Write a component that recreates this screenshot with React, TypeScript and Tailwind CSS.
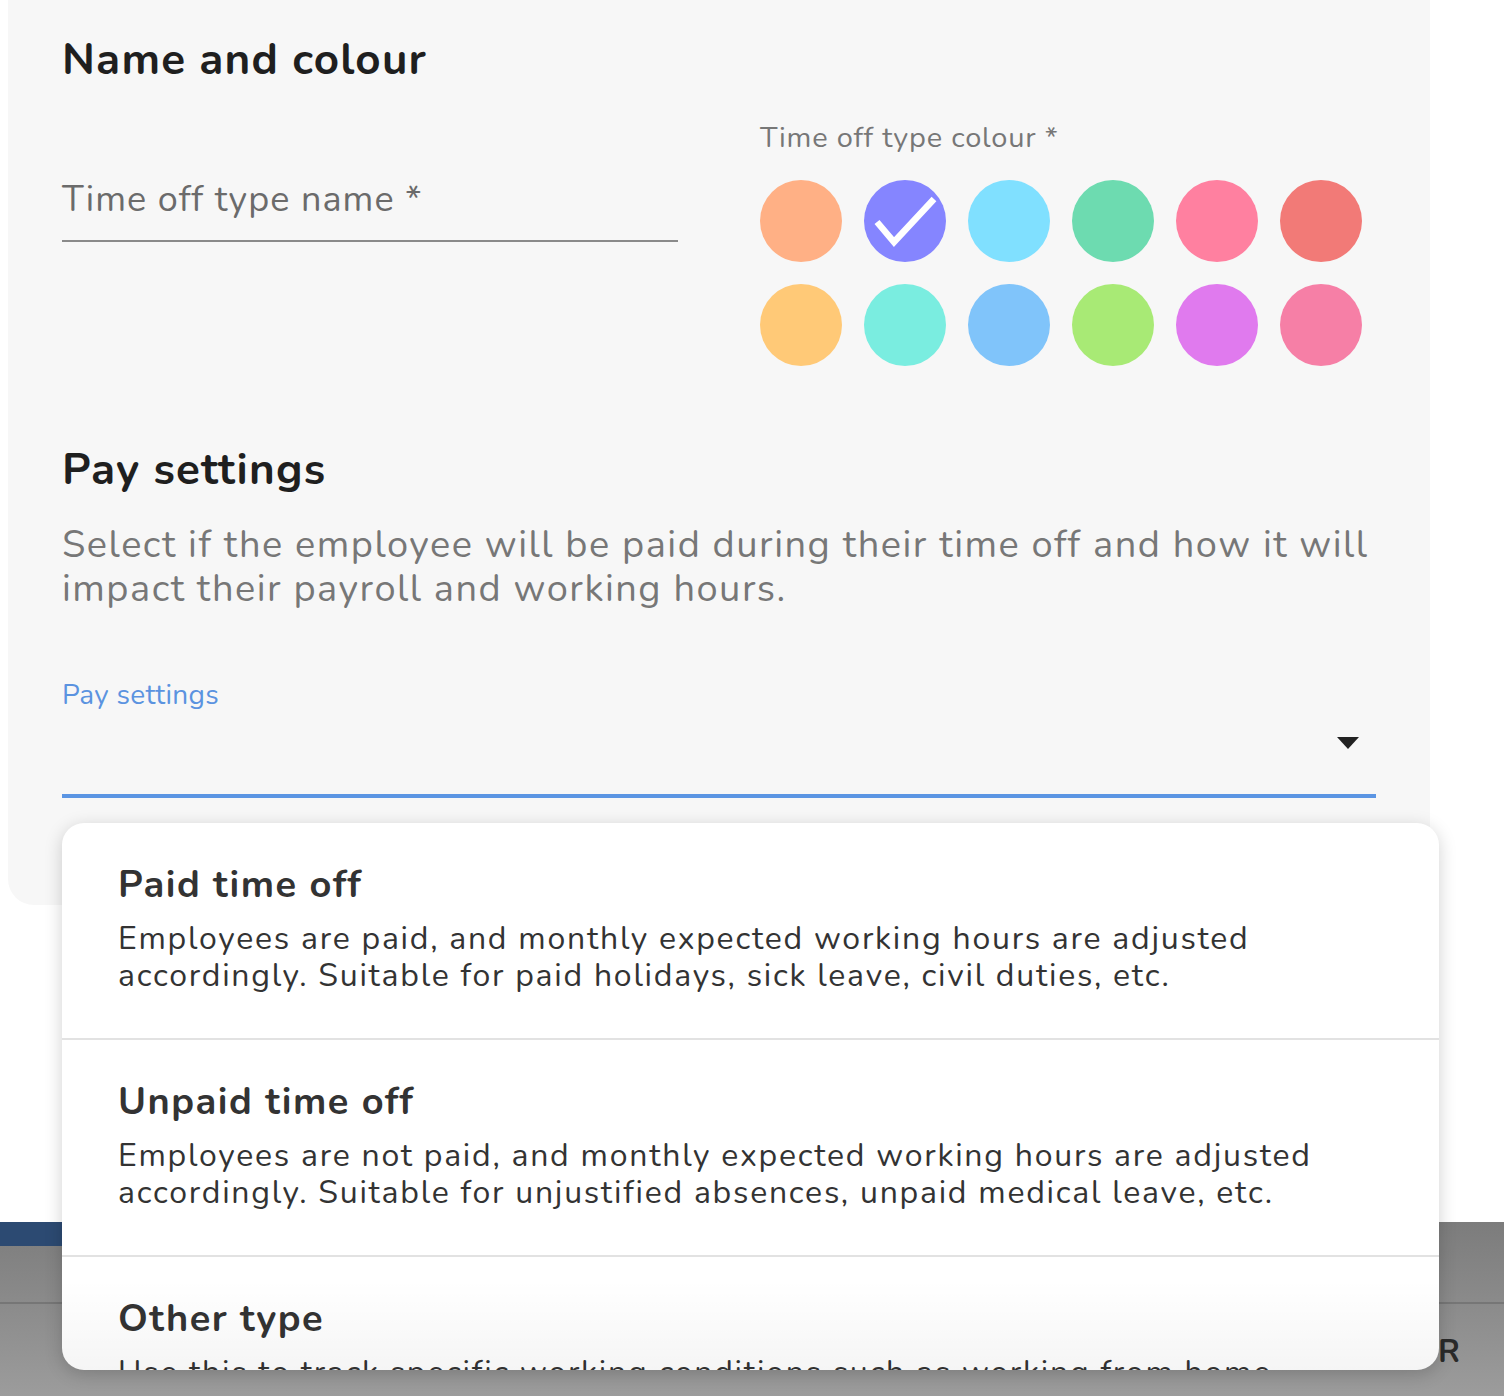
import React from "react";

const colours = [
  "#ffb085", "#8585ff", "#80e0ff", "#6ddbb0", "#ff80a0", "#f27a77",
  "#ffc977", "#7aede0", "#80c4fa", "#a8ea75", "#e07aee", "#f67fa6",
];

const items = [
  {
    title: "Paid time off",
    desc: [
      "Employees are paid, and monthly expected working hours are adjusted",
      "accordingly. Suitable for paid holidays, sick leave, civil duties, etc.",
    ],
  },
  {
    title: "Unpaid time off",
    desc: [
      "Employees are not paid, and monthly expected working hours are adjusted",
      "accordingly. Suitable for unjustified absences, unpaid medical leave, etc.",
    ],
  },
  {
    title: "Other type",
    desc: [
      "Use this to track specific working conditions such as working from home",
      "or other situations that do not affect pay.",
    ],
  },
];

export default function App() {
  const font = { fontFamily: '"Nunito", "Noto Sans", "Open Sans", sans-serif' };
  return (
    <div
      className="relative w-[1504px] h-[1396px] overflow-hidden bg-white flex flex-col"
      style={font}
    >
      {/* Panel */}
      <div className="ml-[8px] w-[1422px] h-[905px] shrink-0 rounded-b-[26px] bg-[#f7f7f7] px-[54px] pt-[36px]">
        <h2 className="text-[44px] leading-[48px] font-bold text-[#1f1f1f] tracking-[1.2px]">
          Name and colour
        </h2>
        <div className="mt-[36px] flex gap-[82px]">
          <div className="w-[616px] pt-[60px]">
            <div className="pb-[20px] border-b-2 border-[#8a8a8a] text-[36px] leading-[40px] text-[#6b6b6b] tracking-[1.1px]">
              Time off type name *
            </div>
          </div>
          <div>
            <div className="text-[29px] leading-[36px] text-[#777777] tracking-[0.8px]">
              Time off type colour *
            </div>
            <div className="mt-[24px] grid grid-cols-6 gap-[22px] w-[602px]">
              {colours.map((c, i) => (
                <div
                  key={i}
                  className="w-[82px] h-[82px] rounded-full flex items-center justify-center"
                  style={{ backgroundColor: c }}
                >
                  {i === 1 && (
                    <svg width="82" height="82" viewBox="-41 -41 82 82">
                      <polyline
                        points="-28,1 -11,21 29,-22"
                        fill="none"
                        stroke="#ffffff"
                        strokeWidth="6.5"
                        strokeLinejoin="miter"
                      />
                    </svg>
                  )}
                </div>
              ))}
            </div>
          </div>
        </div>

        <h2 className="mt-[80px] text-[44px] leading-[48px] font-bold text-[#1f1f1f] tracking-[1.2px]">
          Pay settings
        </h2>
        <p className="mt-[29px] text-[38px] leading-[44px] text-[#777777] tracking-[1.5px]">
          Select if the employee will be paid during their time off and how it will
          <br />
          impact their payroll and working hours.
        </p>
        <div className="mt-[66px] text-[28px] leading-[36px] text-[#5b93e0] tracking-[0.3px]">
          Pay settings
        </div>
        <div className="h-[85px] flex justify-end items-start pt-[24px] pr-[17px] border-b-4 border-[#5b95e3]">
          <svg width="22" height="12" viewBox="0 0 22 12">
            <polygon points="0,0 22,0 11,12" fill="#222222" />
          </svg>
        </div>
      </div>

      {/* White gap */}
      <div className="flex-1" />

      {/* Underlying page (dimmed) */}
      <div className="h-[174px] shrink-0 relative bg-gradient-to-b from-[#7c7c7c] to-[#9c9c9c]">
        <div className="w-[300px] h-[24px] bg-[#2c4a72]" />
        <div className="mt-[56px] h-[2px] bg-[#767676]" />
        <div className="absolute left-[1438px] top-[112px] text-[32px] leading-[36px] font-bold text-[#2a2a2a]">
          R
        </div>
      </div>

      {/* Dropdown menu */}
      <div className="absolute left-[62px] top-[823px] w-[1377px] h-[547px] rounded-[22px] bg-white overflow-hidden shadow-[0_4px_18px_rgba(0,0,0,0.18)]">
        {items.map((it, idx) => (
          <div
            key={idx}
            className={
              idx < 2
                ? "px-[56px] pt-[40px] pb-[44px] border-b-2 border-[#e2e2e2]"
                : "px-[56px] pt-[40px]"
            }
          >
            <div className="text-[38px] leading-[44px] font-bold text-[#333333] tracking-[1.5px]">
              {it.title}
            </div>
            <div className="mt-[13px] text-[32px] leading-[37px] text-[#333333] tracking-[1.75px]">
              {it.desc[0]}
              <br />
              {it.desc[1]}
            </div>
          </div>
        ))}
        <div className="absolute left-0 right-0 bottom-0 h-[90px] bg-gradient-to-b from-[rgba(0,0,0,0)] to-[rgba(0,0,0,0.04)] pointer-events-none" />
      </div>
    </div>
  );
}
